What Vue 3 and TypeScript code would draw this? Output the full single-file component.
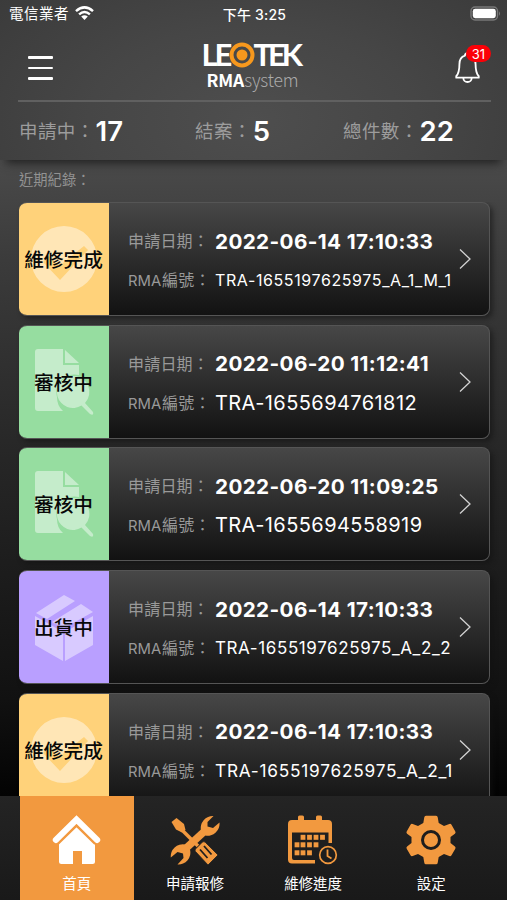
<script setup lang="ts">
type Status = 'done' | 'review' | 'shipping'

interface RepairRecord {
  status: Status
  date: string
  rma: string
  size: 'regular' | 'medium' | 'compact' | 'tight'
}

const statusText: Record<Status, string> = {
  done: '維修完成',
  review: '審核中',
  shipping: '出貨中',
}

const records: RepairRecord[] = [
  { status: 'done', date: '2022-06-14 17:10:33', rma: 'TRA-1655197625975_A_1_M_1', size: 'tight' },
  { status: 'review', date: '2022-06-20 11:12:41', rma: 'TRA-1655694761812', size: 'regular' },
  { status: 'review', date: '2022-06-20 11:09:25', rma: 'TRA-1655694558919', size: 'regular' },
  { status: 'shipping', date: '2022-06-14 17:10:33', rma: 'TRA-1655197625975_A_2_2', size: 'compact' },
  { status: 'done', date: '2022-06-14 17:10:33', rma: 'TRA-1655197625975_A_2_1', size: 'medium' },
]

const stats = [
  { label: '申請中：', value: 17 },
  { label: '結案：', value: 5 },
  { label: '總件數：', value: 22 },
]

const tabs = [
  { id: 'home', label: '首頁' },
  { id: 'repair', label: '申請報修' },
  { id: 'progress', label: '維修進度' },
  { id: 'settings', label: '設定' },
]

const calendarDots: [number, number][] = [
  [15, 22], [21.5, 22], [28, 22], [34.5, 22],
  [9, 29.5], [15, 29.5], [21.5, 29.5], [28, 29.5],
  [9, 37.5], [15, 37.5], [21.5, 37.5],
]
</script>

<template>
  <main class="screen">
    <header class="header">
      <div class="status-bar">
        <div class="carrier">
          <span>電信業者</span>
          <svg class="wifi" viewBox="0 0 19 14">
            <g fill="none" stroke="#fff" stroke-width="2.5">
              <path d="M1 5.1Q9.5-2.4 18 5.1" />
              <path d="M4.1 8.4Q9.5 3.7 14.9 8.4" />
            </g>
            <path d="M6.2 10.6Q9.5 7.7 12.8 10.6L9.5 14Z" fill="#fff" />
          </svg>
        </div>
        <span class="clock">下午 3:25</span>
        <svg class="battery" viewBox="0 0 31 15">
          <rect x="1" y="1" width="26.500" height="13" rx="4" fill="none" stroke="#777" stroke-width="1.400" />
          <rect x="2.800" y="2.800" width="23" height="9.400" rx="2.400" fill="#fff" />
          <path d="M29 5.200q2 2.300 0 4.600z" fill="#777" />
        </svg>
      </div>

      <div class="top-bar">
        <button class="menu" aria-label="menu"><i></i><i></i><i></i></button>
        <div class="brand">
          <div class="logo">
            <span>LE</span>
            <svg class="ring" viewBox="0 0 26 26">
              <circle cx="13" cy="13" r="10.500" fill="none" stroke="#f7981d" stroke-width="4" />
              <circle cx="13" cy="13" r="5.500" fill="#f7981d" />
            </svg>
            <span>TEK</span>
          </div>
          <div class="product">RMA<span>system</span></div>
        </div>
        <button class="bell" aria-label="notifications">
          <svg viewBox="0 0 26 34">
            <g fill="none" stroke="#fff" stroke-width="1.900" stroke-linejoin="round">
              <path d="M10.300 4.700a2.700 2.700 0 0 1 5.400 0C20 6 21.400 9.500 21.400 13.500c0 7 .8 9.700 3.300 12.500v1.600H1.300V26c2.500-2.800 3.300-5.500 3.300-12.500 0-4 1.400-7.500 5.700-8.800Z" />
              <path d="M8.700 27.800a4.300 4.300 0 0 0 8.600 0" />
            </g>
          </svg>
          <span class="count">31</span>
        </button>
      </div>

      <div class="stats">
        <div v-for="stat in stats" :key="stat.label" class="stat">
          <span>{{ stat.label }}</span><strong>{{ stat.value }}</strong>
        </div>
      </div>
    </header>

    <h2 class="section-title">近期紀錄：</h2>

    <section class="records">
      <article v-for="(record, index) in records" :key="index" class="card">
        <div class="badge" :class="record.status">
          <svg viewBox="0 0 66 66">
            <template v-if="record.status === 'done'">
              <path fill-rule="evenodd" d="M33 0a33 33 0 1 0 0 66a33 33 0 1 0 0-66ZM12 36l6-6 10 10 25-20 4 4-28 30Z" />
            </template>
            <template v-else-if="record.status === 'review'">
              <path d="M7 0h25v16h16v10A18 18 0 0 0 26 48q0 9 6 14H7q-3 0-3-3V3q0-3 3-3Z" />
              <path d="M34 1l14 13H34Z" />
              <path d="M42 27a16 16 0 1 0 8.500 29.500L59 65q4 2 3-2l-8-9A16 16 0 0 0 42 27Z" />
            </template>
            <template v-else>
              <path d="M5 19L33 1l11 6-28 18Z" />
              <path d="M21 28L50 10l12 8-29 16Z" />
              <path d="M4 22l28 16v29L4 51Z" />
              <path d="M34 38l28-16v29L34 67Z" />
            </template>
          </svg>
          <span>{{ statusText[record.status] }}</span>
        </div>
        <div class="details">
          <div class="row">
            <span class="label">申請日期：</span>
            <strong class="date">{{ record.date }}</strong>
          </div>
          <div class="row">
            <span class="label"><small>RMA</small>編號：</span>
            <span class="rma" :class="record.size">{{ record.rma }}</span>
          </div>
        </div>
        <svg class="chevron" viewBox="0 0 12 22">
          <path d="M1 1.500L11 11L1 20.500" fill="none" stroke="#d2d2d2" stroke-width="1.300" />
        </svg>
      </article>
    </section>

    <nav class="tabs">
      <a v-for="tab in tabs" :key="tab.id" class="tab" :class="{ active: tab.id === 'home' }">
        <svg v-if="tab.id === 'home'" viewBox="0 0 50 50">
          <path d="M24.500 11L43 28v18.500q0 2.500-2.500 2.500H30V36H21v13H9.500Q7 49 7 46.500V28Z" fill="#fff" />
          <path d="M4 27L24.500 7L45 27" fill="none" stroke="#f2993f" stroke-width="7.500" />
          <path d="M3.800 25L24.500 4.500L45.200 25" fill="none" stroke="#fff" stroke-width="6" stroke-linecap="round" />
        </svg>
        <svg v-else-if="tab.id === 'repair'" viewBox="0 0 50 50">
          <path d="M13 36L37 14" stroke="#f2993f" stroke-width="7.500" />
          <path d="M43.500 1A12 12 0 0 0 31 15.500L35.500 20.500A12 12 0 0 0 49.500 7.500L43 13 37.500 11.500 37.500 7Z" fill="#f2993f" />
          <path d="M7.500 49.500A12 12 0 0 0 20 34.500L15 29.500A12 12 0 0 0 .8 42.500l6.700-5.500 5.500 1.500L13.500 43Z" fill="#f2993f" />
          <path d="M11 14L28 31" stroke="#f2993f" stroke-width="3.500" />
          <path d="M1.500 7L6.500 3l7.500 6 1.500 6-3.500 2.500L6 14.500Z" fill="#f2993f" />
          <path d="M25.500 34l7-7q1.500-1 3 .5L48 40 38 50 25.500 36.500Q24.500 35 25.500 34Z" fill="#f2993f" stroke="#1f1f1f" stroke-width=".8" />
          <path d="M30 34.500L37.500 43M34 31l7.500 8.500" stroke="#1f1f1f" stroke-width="1.800" />
        </svg>
        <svg v-else-if="tab.id === 'progress'" viewBox="0 0 50 50">
          <path fill="#f2993f" fill-rule="evenodd" d="M4 5h6V2q0-1.500 1.500-1.500h3Q16 .5 16 2v3h12V2q0-1.500 1.500-1.500h3Q34 .5 34 2v3h6q4 0 4 4v19h-3.500V17.500H4V43q0 2 2 2h21v3.500H4q-4 0-4-4V9q0-4 4-4Z" />
          <rect v-for="([x, y], i) in calendarDots" :key="i" :x="x - 2.4" :y="y - 2.200" width="4.800" height="5" fill="#f2993f" />
          <circle cx="40" cy="40" r="8.300" fill="none" stroke="#f2993f" stroke-width="1.700" />
          <path d="M39.500 34.500V41l4 2.500" fill="none" stroke="#f2993f" stroke-width="1.800" />
        </svg>
        <svg v-else viewBox="0 0 50 50">
          <path d="M20 .8h10q1.500 0 1.700 1.500l1 5.700 5.300 3 5.300-2q1.400-.5 2.200.8l3.800 6.600q.7 1.300-.4 2.300L44.500 22v6l4.400 3.400q1.100 1 .4 2.300l-3.800 6.600q-.8 1.200-2.200.7L38 39l-5.300 3-1 5.700Q31.500 49.200 30 49.200H20q-1.500 0-1.700-1.500l-1-5.700-5.300-3-5.300 2q-1.400.5-2.200-.7L.7 33.700q-.7-1.300.4-2.300L5.500 28v-6L1.100 18.700Q0 17.700.7 16.400L4.500 9.800q.8-1.300 2.200-.8L12 11l5.300-3 1-5.700Q18.500.8 20 .8Z" fill="#f2993f" />
          <circle cx="25" cy="25" r="8.500" fill="none" stroke="#1d1d1d" stroke-width="3" />
        </svg>
        <span>{{ tab.label }}</span>
      </a>
    </nav>
  </main>
</template>

<style>
body {
  margin: 0;
  background: #000;
}
</style>

<style scoped>
* {
  box-sizing: border-box;
}

.screen {
  display: flex;
  flex-direction: column;
  width: 507px;
  height: 900px;
  overflow: hidden;
  color: #fff;
  font-family: Inter, "Noto Sans CJK TC", sans-serif;
  background: linear-gradient(#4a4a4a 0, #4a4a4a 160px, #3b3b3b 260px, #262626 460px, #111 700px, #030303 796px);
}

button {
  padding: 0;
  border: 0;
  background: none;
}

.header {
  flex: none;
  height: 160px;
  background: radial-gradient(ellipse 330px 190px at 50% 75%, #4e4e4e, #464646 50%, #3b3b3b);
  box-shadow: 0 9px 9px -6px #202020;
}

.status-bar {
  display: grid;
  grid-template-columns: 1fr auto 1fr;
  align-items: center;
  height: 28px;
  padding: 0 6px 0 9px;
  font-size: 14.500px;
  font-weight: 500;
}

.carrier {
  display: flex;
  align-items: center;
  gap: 6px;
  height: 26px;
  font-size: 14.500px;
  font-weight: 400;
  letter-spacing: 0.5px;
  line-height: 24px;
}

.wifi {
  width: 19px;
  height: 14px;
  margin-top: -2px;
}

.clock {
  margin: -1px 1px 0 0;
  font-size: 14px;
  letter-spacing: 0.2px;
  white-space: nowrap;
}

.battery {
  justify-self: end;
  width: 31px;
  height: 15px;
  margin-top: -1px;
}

.top-bar {
  display: flex;
  justify-content: space-between;
  height: 74px;
  margin: 0 16px 0 18px;
  padding: 13px 0 0 10px;
  border-bottom: 2px solid #606060;
}

.menu {
  display: flex;
  flex-direction: column;
  gap: 8px;
  width: 25px;
  padding-top: 15px;
}

.menu i {
  height: 2.500px;
  border-radius: 1px;
  background: #fff;
}

.brand {
  display: flex;
  flex-direction: column;
  align-items: flex-start;
  width: 104px;
  margin-left: -1px;
}

.logo {
  display: flex;
  align-items: center;
  height: 27px;
  font-family: Lato, Inter, sans-serif;
  font-size: 31px;
  font-weight: 700;
  letter-spacing: -4px;
  line-height: 27px;
}

.logo span:first-child {
  letter-spacing: -3px;
}

.ring {
  width: 26px;
  height: 26px;
  margin: 0 -2px 0 0;
}

.product {
  height: 25px;
  margin-left: 5px;
  font-family: "Noto Sans CJK TC", sans-serif;
  font-size: 17.500px;
  font-weight: 700;
  letter-spacing: -0.150px;
  line-height: 24px;
}

.product span {
  color: #aaa;
  font-weight: 300;
}

.bell {
  display: flex;
  align-items: flex-start;
  width: 36px;
  padding-top: 11px;
  color: #fff;
}

.bell svg {
  flex: none;
  width: 25px;
  height: 33px;
  margin-top: -1px;
}

.count {
  flex: none;
  width: 25px;
  height: 17px;
  margin: -7px 0 0 -14px;
  border-radius: 9px;
  background: #fb0007;
  font: 400 13px/18px Inter, sans-serif;
}

.stats {
  display: grid;
  grid-template-columns: 176px 148px 1fr;
  align-items: center;
  height: 57px;
  padding-left: 19px;
}

.stat {
  display: flex;
  align-items: center;
  color: #9c9c9c;
  font-size: 18.500px;
  letter-spacing: 0.4px;
}

.stat span {
  margin-top: -2px;
}

.stat strong {
  margin-left: 1px;
  color: #fff;
  font-size: 27.500px;
  font-weight: 600;
  letter-spacing: 0;
}

.section-title {
  flex: none;
  height: 42px;
  margin: 0;
  padding: 9px 0 0 19px;
  color: #929292;
  font-size: 14.300px;
  font-weight: 400;
  line-height: 21px;
}

.records {
  display: flex;
  flex: 1;
  flex-direction: column;
  gap: 8.700px;
  min-height: 0;
  padding: 0 17px 0 19px;
  overflow: hidden;
}

.card {
  display: flex;
  flex: none;
  align-items: center;
  height: 114px;
  overflow: hidden;
  border: 1px solid #555;
  border-left: 0;
  border-radius: 8px;
  background: linear-gradient(#474747, #121212);
  box-shadow: 3px 3px 5px #1118;
}

.badge {
  display: grid;
  flex: none;
  place-items: center;
  width: 90px;
  height: 114px;
  color: #080808;
  font-size: 19.700px;
  font-weight: 500;
}

.badge > * {
  grid-area: 1 / 1;
}

.badge span {
  margin: -1px 1px 0 0;
  white-space: nowrap;
}

.badge svg {
  width: 66px;
  height: 66px;
  overflow: visible;
  fill: #fff;
  fill-opacity: 0.45;
}

.done { background: #ffd27a; }
.review { background: #96dda0; }
.shipping { background: #b99fff; }

.details {
  flex: 1;
  padding-left: 19px;
}

.row {
  display: flex;
  align-items: center;
  height: 39px;
  white-space: nowrap;
}

.label {
  flex: none;
  width: 87px;
  margin-top: 1px;
  color: #999;
  font-size: 16px;
  letter-spacing: 0.2px;
}

.label small {
  margin-right: 1px;
  font-size: 14.800px;
  letter-spacing: 0;
}

.date {
  margin-top: 3px;
  font-size: 20.700px;
  font-weight: 700;
  letter-spacing: 0.370px;
}

.rma { margin-top: 3px; }
.regular { font-size: 20px; letter-spacing: 0.420px; }
.medium { font-size: 17.300px; letter-spacing: 0.750px; }
.compact { font-size: 17px; letter-spacing: 0.600px; }
.tight { font-size: 16px; letter-spacing: 0.600px; }

.chevron {
  flex: none;
  width: 12px;
  height: 22px;
  margin-right: 18px;
}

.tabs {
  display: flex;
  flex: none;
  gap: 4.700px;
  height: 104px;
  padding-left: 20px;
  background: linear-gradient(#242424, #191919);
}

.tab {
  display: flex;
  flex: none;
  flex-direction: column;
  align-items: center;
  width: 113.500px;
  padding-top: 19px;
  font-size: 14.500px;
  line-height: 20px;
}

.tab svg {
  width: 50px;
  height: 50px;
  margin-bottom: 9px;
}

.active {
  background: #f2993f;
}
</style>
